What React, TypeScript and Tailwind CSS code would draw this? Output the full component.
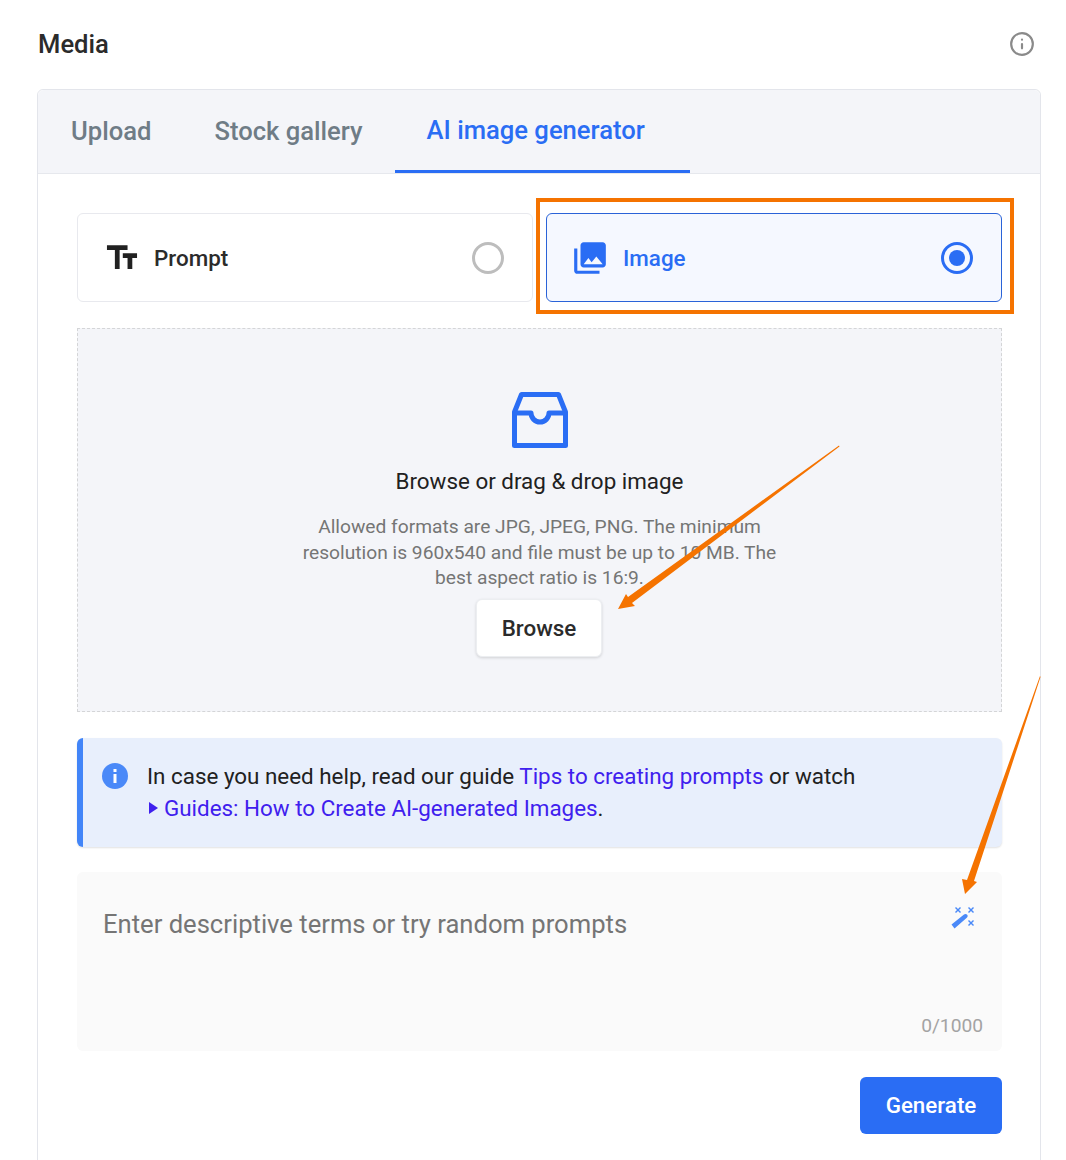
import { Info } from "lucide-react";

const Radio = ({ checked }: { checked?: boolean }) =>
  checked ? (
    <span className="flex items-center justify-center w-8 h-8 rounded-full border-[3px] border-[#2a6df4]">
      <span className="w-4 h-4 rounded-full bg-[#2a6df4]" />
    </span>
  ) : (
    <span className="w-8 h-8 rounded-full border-[3px] border-[#bdbdbd]" />
  );

const Annotations = () => (
  <svg className="absolute left-0 top-0 pointer-events-none" width="1066" height="1160" viewBox="0 0 1066 1160">
    <polygon points="839,445.500 839.500,446.500 632,603 635,606 618,609 626,594 628,597" fill="#f57300" />
    <polygon points="1040,676 1040.500,677 974,881 977,882 965,894 962,879 967,880" fill="#f57300" />
  </svg>
);

export default function App() {
  return (
    <div className="relative w-[1066px] h-[1160px] overflow-hidden bg-white font-['Roboto',sans-serif]">
      <div className="flex items-center justify-between pl-[38px] pr-[31px] h-[89px]">
        <h2 className="text-[25.6px] font-medium text-[#2b2b2b]">Media</h2>
        <Info size={26} strokeWidth={2} className="text-[#8a8a8a] mb-px" />
      </div>
      <div className="ml-[37px] w-[1004px] h-[1080px] border border-[#e3e5eb] rounded-t-md">
        <div className="flex h-[84px] bg-[#f4f5f9] border-b border-[#e6e8ed] rounded-t-md">
          <button className="pl-[33px] pr-[31px] pb-px text-[25.6px] font-medium text-[#6f7c86]">Upload</button>
          <button className="px-8 pb-px text-[25.6px] font-medium text-[#6f7c86]">Stock gallery</button>
          <button className="pl-8 pr-[45px] h-[83px] text-[25.6px] font-medium text-[#2a6df4] border-b-[3px] border-[#2a6df4]">
            AI image generator
          </button>
        </div>
        <div className="pl-[39px] pr-[38px] pt-[39px]">
          <div className="flex gap-[13px]">
            <div className="flex items-center justify-between w-[456px] h-[89px] pl-[27px] pr-7 rounded-md border border-[#e8e9ee]">
              <div className="flex items-center gap-[13px]">
                <svg width="38" height="38" viewBox="0 0 24 24" fill="#212121" className="-ml-[2px]">
                  <path d="M2.5 4v3h5v12h3V7h5V4zm19 5h-9v3h3v7h3v-7h3z" />
                </svg>
                <span className="pt-[2px] text-[22.4px] font-medium text-[#2b2b2b]">Prompt</span>
              </div>
              <Radio />
            </div>
            <div className="relative flex items-center justify-between w-[456px] h-[89px] pl-6 pr-7 rounded-md border border-[#2a63d8] bg-[#f5f8ff]">
              <div className="flex items-center gap-[14px]">
                <svg width="38" height="38" viewBox="0 0 24 24" fill="#2a6df4">
                  <path d="M22 16V4c0-1.1-.9-2-2-2H8c-1.1 0-2 .9-2 2v12c0 1.100.9 2 2 2h12c1.100 0 2-.9 2-2m-11-4 2.030 2.710L16 11l4 5H8zM2 6v14c0 1.100.9 2 2 2h14v-2H4V6z" />
                </svg>
                <span className="pt-[2px] text-[22.4px] font-medium text-[#2a6df4]">Image</span>
              </div>
              <Radio checked />
              <div className="absolute -left-[11px] -top-4 w-[478px] h-[116px] border-4 border-[#f57300]" />
            </div>
          </div>
          <div className="flex flex-col items-center mt-[26px] h-[384px] border border-dashed border-[#d4d5d7] bg-[#f4f5f9] pt-[62px]">
            <svg width="56" height="56" viewBox="0 0 56 56" fill="none" stroke="#2a6df4" strokeWidth="5" strokeLinejoin="round" className="mt-px">
              <path d="M9.500 2.500H46.500L53.500 20V53.500H2.500V20Z" />
              <path d="M2.500 21H19a9 9 0 0 0 18 0H53.500" />
            </svg>
            <p className="mt-[17px] text-[22.4px] leading-[32px] text-[#212121]">Browse or drag &amp; drop image</p>
            <p className="mt-[17px] w-[490px] text-center text-[19.2px] leading-[25.600px] text-[#757575]">
              Allowed formats are JPG, JPEG, PNG. The minimum resolution is 960x540 and file must be up to 10 MB. The best aspect ratio is 16:9.
            </p>
            <button className="mt-[8px] mr-px pt-[2px] w-[126px] h-[58px] bg-white rounded-md border border-[#eceef1] shadow-[0_1px_3px_rgba(0,0,0,0.15)] text-[22.4px] font-medium text-[#2b2b2b]">
              Browse
            </button>
          </div>
          <div className="flex mt-[26px] h-[109px] rounded-md border-l-[6px] border-[#4285f8] bg-[#e8effc] shadow-[0_1px_2px_rgba(0,0,0,0.12)] pl-[19px] pt-[22px]">
            <svg width="26" height="26" viewBox="0 0 26 26" className="shrink-0 mt-[3px]">
              <circle cx="13" cy="13" r="13" fill="#4a89f8" />
              <rect x="11.500" y="11" width="3" height="9" fill="#fff" />
              <rect x="11.500" y="6" width="3" height="3" fill="#fff" />
            </svg>
            <div className="ml-[19px] text-[22.4px] leading-[32px] text-[#212121]">
              <p>
                In case you need help, read our guide <span className="text-[#3f20ee]">Tips to creating prompts</span> or watch
              </p>
              <p className="flex items-center">
                <svg width="10" height="12" viewBox="0 0 10 12" className="ml-[2px] mr-[5px]">
                  <path d="M0 0L9 6L0 12Z" fill="#3f20ee" />
                </svg>
                <span className="text-[#3f20ee]">Guides: How to Create AI-generated Images</span>.
              </p>
            </div>
          </div>
          <div className="relative mt-[25px] h-[179px] rounded-md bg-[#fafafa] pl-[26px] pt-[34px]">
            <p className="text-[25.6px] leading-[36px] text-[#757575]">Enter descriptive terms or try random prompts</p>
            <svg width="26" height="26" viewBox="0 0 26 26" className="absolute right-[26px] top-[32px]" fill="#4a89f8">
              <path d="M1.500 20.500L14 10.500C15 9.700 16.500 9.800 17.200 10.800C18 11.700 17.800 13 16.800 13.800L4.500 24.500Z" />
              <path d="M6 3l2 2 2-2 1 1-2 2 2 2-1 1-2-2-2 2-1-1 2-2-2-2z" />
              <path d="M19 3l2 2 2-2 1 1-2 2 2 2-1 1-2-2-2 2-1-1 2-2-2-2z" />
              <path d="M19 16l2 2 2-2 1 1-2 2 2 2-1 1-2-2-2 2-1-1 2-2-2-2z" />
            </svg>
            <span className="absolute right-[19px] bottom-[10px] text-[19.2px] text-[#a3a3a3]">0/1000</span>
          </div>
          <div className="flex justify-end mt-[26px]">
            <button className="w-[142px] h-[57px] rounded-md bg-[#2a6df4] text-[22.4px] font-medium text-white">Generate</button>
          </div>
        </div>
      </div>
      <Annotations />
    </div>
  );
}
